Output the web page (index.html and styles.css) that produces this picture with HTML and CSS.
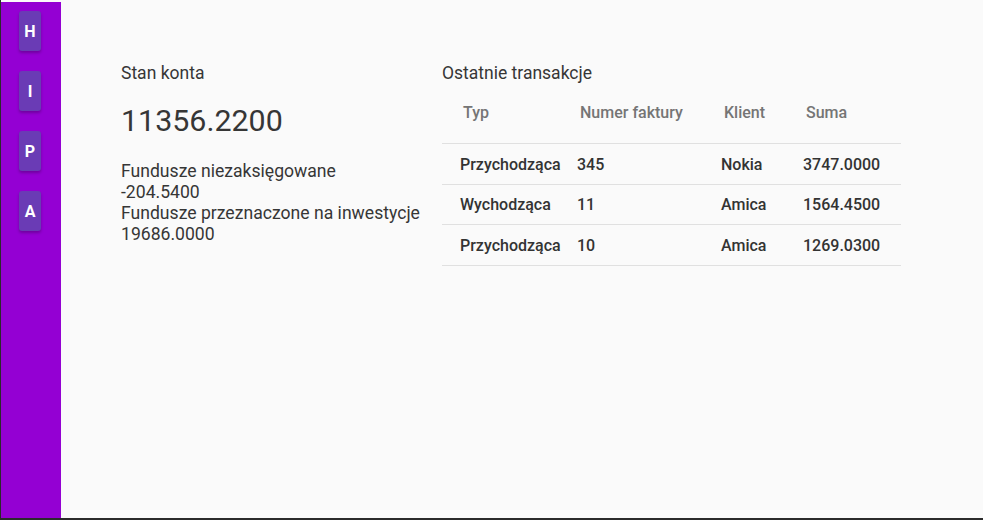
FILE: index.html
```html
<!DOCTYPE html>
<html lang="pl">
<head>
<meta charset="utf-8">
<title>Panel</title>
<link rel="stylesheet" href="styles.css">
</head>
<body>
<div class="frame">
  <nav class="sidebar">
    <button class="nav-btn">H</button>
    <button class="nav-btn">I</button>
    <button class="nav-btn">P</button>
    <button class="nav-btn">A</button>
  </nav>
  <main class="content">
    <section class="account">
      <h2 class="section-title">Stan konta</h2>
      <div class="balance">11356.2200</div>
      <div class="funds">
        <div>Fundusze niezaksięgowane</div>
        <div>-204.5400</div>
        <div>Fundusze przeznaczone na inwestycje</div>
        <div>19686.0000</div>
      </div>
    </section>
    <section class="transactions">
      <h2 class="section-title">Ostatnie transakcje</h2>
      <table class="tx-table">
        <thead>
          <tr>
            <th class="c1">Typ</th>
            <th class="c2">Numer faktury</th>
            <th class="c3">Klient</th>
            <th class="c4">Suma</th>
          </tr>
        </thead>
        <tbody>
          <tr><td>Przychodząca</td><td>345</td><td>Nokia</td><td>3747.0000</td></tr>
          <tr><td>Wychodząca</td><td>11</td><td>Amica</td><td>1564.4500</td></tr>
          <tr><td>Przychodząca</td><td>10</td><td>Amica</td><td>1269.0300</td></tr>
        </tbody>
      </table>
    </section>
  </main>
</div>
</body>
</html>
```

FILE: styles.css
```css
html {
  background: #fafafa;
}
html, body {
  margin: 0;
  padding: 0;
}
body {
  height: 518px;
  border-left: 1px solid #2b2b2b;
  border-bottom: 2px solid #2b2b2b;
  font-family: Roboto, "Noto Sans", sans-serif;
  color: #363636;
}
.frame {
  display: flex;
  height: 516px;
  margin-top: 2px;
  background: #fafafa;
}
.sidebar {
  width: 60px;
  flex: none;
  background: #9400d3;
  display: flex;
  flex-direction: column;
  align-items: center;
  gap: 20px;
  padding-top: 9px;
  padding-right: 2px;
  box-sizing: border-box;
}
.nav-btn {
  width: 22px;
  height: 40px;
  border: none;
  border-radius: 3px;
  padding: 0;
  background: #6a3bb5;
  color: #fff;
  font-family: Roboto, sans-serif;
  font-weight: 700;
  font-size: 16px;
  box-shadow: 0 2px 3px rgba(0, 0, 0, 0.25);
}
.content {
  flex: 1;
  display: flex;
  padding: 61px 0 0 60px;
  box-sizing: border-box;
}
.section-title {
  margin: 0;
  font-size: 17.5px;
  font-weight: 400;
  line-height: 20px;
  color: #363636;
}
.account {
  width: 321px;
  flex: none;
}
.balance {
  font-size: 30.4px;
  line-height: 36px;
  margin-top: 20px;
  color: #363636;
}
.funds {
  margin-top: 22px;
  font-size: 17.6px;
  line-height: 21px;
}
.transactions {
  width: 459px;
  flex: none;
}
.tx-table {
  width: 459px;
  table-layout: fixed;
  border-collapse: collapse;
  font-size: 16px;
}
.tx-table th {
  text-align: left;
  font-weight: 500;
  color: #757575;
  height: 56px;
  padding: 1px 0 3px 21px;
  border-bottom: 1px solid #e0e0e0;
  vertical-align: middle;
}
.tx-table td {
  height: 40px;
  padding: 0 0 0 18px;
  font-weight: 500;
  color: #333;
  border-bottom: 1px solid #e0e0e0;
  white-space: nowrap;
}
.tx-table tbody tr:nth-child(2) td {
  height: 39px;
}
.tx-table .c1 { width: 96px; }
.tx-table .c2 { width: 123px; }
.tx-table .c3 { width: 61px; }
```
